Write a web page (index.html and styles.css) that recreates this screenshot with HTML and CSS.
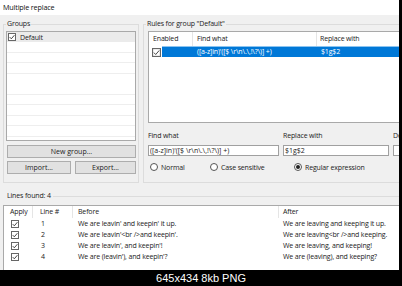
FILE: index.html
```html
<!DOCTYPE html>
<html lang="en">
<head>
  <meta charset="UTF-8">
  <title>Multiple replace</title>
  <link rel="stylesheet" href="styles.css">
</head>
<body>
  <div class="shot">
    <div class="window">
      <div class="titlebar">Multiple replace</div>
      <div class="dialog">
        <div class="top">
          <fieldset class="box groups">
            <legend>Groups</legend>
            <div class="list group-list">
              <div class="group-row">
                <svg class="cb" viewBox="0 0 8 8" width="8" height="8"><rect x="0.5" y="0.5" width="7" height="7" fill="#fff" stroke="#666"/><path d="M1.7 4.1 3.3 5.8 6.4 2.2" fill="none" stroke="#333" stroke-width="0.9"/></svg>
                <span>Default</span>
              </div>
            </div>
            <button class="btn wide">New group...</button>
            <div class="btn-pair">
              <button class="btn">Import...</button>
              <button class="btn">Export...</button>
            </div>
          </fieldset>

          <fieldset class="box rules">
            <legend>Rules for group "Default"</legend>
            <div class="list rules-list">
              <div class="rules-head">
                <span>Enabled</span>
                <span>Find what</span>
                <span>Replace with</span>
              </div>
              <div class="rule-row">
                <svg class="cb big" viewBox="0 0 8 8" width="9" height="9"><rect x="0.5" y="0.5" width="7" height="7" fill="#fff" stroke="#666"/><path d="M1.7 4.1 3.3 5.8 6.4 2.2" fill="none" stroke="#333" stroke-width="0.8"/></svg>
                <div class="sel">
                  <span></span>
                  <span>([a-z]in)'([$ \r\n\.\,!\?\)] +)</span>
                  <span>$1g$2</span>
                </div>
              </div>
            </div>

            <div class="edit">
              <label>Find what</label>
              <label>Replace with</label>
              <label>Description</label>
              <input type="text" value="([a-z]in)'([$ \r\n\.\,!\?\)] +)">
              <input type="text" value="$1g$2">
              <input type="text" value="">
            </div>

            <div class="radios">
              <div class="radio"><span class="dot"></span>Normal</div>
              <div class="radio"><span class="dot"></span>Case sensitive</div>
              <div class="radio"><span class="dot on"></span>Regular expression</div>
            </div>
          </fieldset>
        </div>

        <div class="lines-head"><span>Lines found: 4</span></div>

        <div class="list lines-list">
          <div class="lines-row head">
            <span>Apply</span>
            <span>Line #</span>
            <span>Before</span>
            <span>After</span>
          </div>
          <div class="lines-row">
            <span><svg class="cb" viewBox="0 0 8 8" width="8" height="8"><rect x="0.5" y="0.5" width="7" height="7" fill="#fff" stroke="#666"/><path d="M1.7 4.1 3.3 5.8 6.4 2.2" fill="none" stroke="#333" stroke-width="0.9"/></svg></span>
            <span>1</span>
            <span>We are leavin' and keepin' it up.</span>
            <span>We are leaving and keeping it up.</span>
          </div>
          <div class="lines-row">
            <span><svg class="cb" viewBox="0 0 8 8" width="8" height="8"><rect x="0.5" y="0.5" width="7" height="7" fill="#fff" stroke="#666"/><path d="M1.7 4.1 3.3 5.8 6.4 2.2" fill="none" stroke="#333" stroke-width="0.9"/></svg></span>
            <span>2</span>
            <span>We are leavin'&lt;br /&gt;and keepin'.</span>
            <span>We are leaving&lt;br /&gt;and keeping.</span>
          </div>
          <div class="lines-row">
            <span><svg class="cb" viewBox="0 0 8 8" width="8" height="8"><rect x="0.5" y="0.5" width="7" height="7" fill="#fff" stroke="#666"/><path d="M1.7 4.1 3.3 5.8 6.4 2.2" fill="none" stroke="#333" stroke-width="0.9"/></svg></span>
            <span>3</span>
            <span>We are leavin', and keepin'!</span>
            <span>We are leaving, and keeping!</span>
          </div>
          <div class="lines-row">
            <span><svg class="cb" viewBox="0 0 8 8" width="8" height="8"><rect x="0.5" y="0.5" width="7" height="7" fill="#fff" stroke="#666"/><path d="M1.7 4.1 3.3 5.8 6.4 2.2" fill="none" stroke="#333" stroke-width="0.9"/></svg></span>
            <span>4</span>
            <span>We are (leavin'), and keepin'?</span>
            <span>We are (leaving), and keeping?</span>
          </div>
        </div>
      </div>
    </div>
    <div class="caption">645x434 8kb PNG</div>
  </div>
</body>
</html>
```

FILE: styles.css
```css
* {
  margin: 0;
  padding: 0;
  box-sizing: border-box;
}

body {
  background: #000;
  font-family: "Open Sans", "Noto Sans", sans-serif;
  letter-spacing: -0.15px;
  color: #222;
}

.shot {
  width: 402px;
  height: 286px;
  background: #000;
  display: flex;
  flex-direction: column;
  overflow: hidden;
}

.window {
  width: 399px;
  height: 270px;
  flex-shrink: 0;
  background: #f0f0f0;
  overflow: hidden;
}

.titlebar {
  height: 15px;
  background: #fff;
  padding-left: 3px;
  font-size: 7.2px;
  line-height: 15px;
  color: #111;
}

.dialog {
  padding-left: 3px;
}

.top {
  display: flex;
  gap: 4px;
  margin-top: 4px;
}

.box {
  border: 1px solid #dcdcdc;
  height: 164px;
  flex-shrink: 0;
  min-width: 0;
}

legend {
  font-size: 7px;
  line-height: 10px;
  padding: 0 1px;
  color: #222;
}

.groups {
  width: 136px;
  padding: 2px 2px 0 2px;
}

.rules {
  width: 320px;
  padding: 2px 0 0 4px;
}

.rules legend {
  margin-left: -2px;
}

.list {
  background: #fff;
  border: 1px solid #a9a9a9;
  font-size: 7px;
}

.cb {
  display: block;
  flex-shrink: 0;
}

/* groups */
.group-list {
  height: 110px;
  background: repeating-linear-gradient(#fff 0 9.5px, #eeeeee 9.5px 10.5px);
}

.group-row {
  display: flex;
  align-items: center;
  gap: 4px;
  height: 10px;
  padding-left: 1px;
  background: #ebebeb;
}

.btn {
  display: block;
  width: 129px;
  height: 13px;
  margin-left: 1px;
  background: #e1e1e1;
  border: 1px solid #adadad;
  font: inherit;
  font-size: 7px;
  color: #222;
}

.btn.wide {
  margin-top: 4px;
}

.btn-pair {
  display: grid;
  grid-template-columns: 64px 61px;
  gap: 4px;
  margin: 3px 0 0 1px;
}

.btn-pair .btn {
  width: auto;
  margin: 0;
}

/* rules */
.rules-list {
  height: 92px;
}

.rules-head {
  display: grid;
  grid-template-columns: 44px 124px 1fr;
  height: 14px;
  line-height: 14px;
}

.rules-head span {
  border-right: 1px solid #e5e5e5;
  padding-left: 4px;
}

.rules-head span:last-child {
  padding-left: 3px;
}

.rule-row {
  display: flex;
  height: 11px;
}

.rule-row .cb {
  margin: 2px 0 0 3px;
}

.sel {
  flex: 1;
  margin-left: 1px;
  display: grid;
  grid-template-columns: 31px 124px 1fr;
  background: #0078d7;
  border-top: 1px solid #8cc4f0;
  color: #fff;
  line-height: 10px;
  white-space: nowrap;
}

.sel span + span {
  padding-left: 4px;
}

.edit {
  display: grid;
  grid-template-columns: 131px 106px 100px;
  column-gap: 4px;
  row-gap: 4px;
  margin-top: 8px;
  font-size: 7px;
}

.edit label {
  line-height: 10px;
  white-space: nowrap;
}

.edit input {
  height: 11px;
  border: 1px solid #a0a0a0;
  background: #fff;
  font: inherit;
  font-size: 7px;
  color: #222;
  padding: 0 1px;
  outline: none;
}

.radios {
  display: flex;
  align-items: center;
  height: 10px;
  margin-top: 6px;
  padding-left: 2px;
  font-size: 7px;
}

.radio {
  display: flex;
  align-items: center;
  gap: 3px;
  white-space: nowrap;
}

.radio:nth-child(1) {
  width: 60px;
}

.radio:nth-child(2) {
  width: 84px;
}

.dot {
  width: 8px;
  height: 8px;
  border: 1px solid #555;
  border-radius: 50%;
  background: #fff;
  display: grid;
  place-items: center;
}

.dot.on::after {
  content: "";
  width: 4px;
  height: 4px;
  border-radius: 50%;
  background: #222;
}

/* lines */
.lines-head {
  display: flex;
  align-items: center;
  height: 10px;
  margin-top: 8px;
  padding-left: 4px;
  font-size: 7px;
  line-height: 10px;
  white-space: nowrap;
}

.lines-head::after {
  content: "";
  flex: 1;
  height: 1px;
  margin-left: 2px;
  background: #dcdcdc;
}

.lines-list {
  width: 420px;
  height: 80px;
  margin-top: 4px;
}

.lines-row {
  display: grid;
  grid-template-columns: 29px 40px 206px 1fr;
  height: 11px;
  line-height: 11px;
  white-space: nowrap;
}

.lines-row span {
  display: flex;
  align-items: center;
}

.lines-row span:nth-child(1) { padding-left: 7px; }
.lines-row span:nth-child(2) { padding-left: 8px; }
.lines-row span:nth-child(3) { padding-left: 5px; }
.lines-row span:nth-child(4) { padding-left: 4px; }

.lines-row.head {
  height: 12px;
  line-height: 12px;
}

.lines-row.head span {
  border-right: 1px solid #e5e5e5;
}

.lines-row.head span:nth-child(1) { padding-left: 6px; }
.lines-row.head span:nth-child(2) { padding-left: 7px; }
.lines-row.head span:last-child { border-right: none; }

.caption {
  height: 16px;
  color: #fff;
  font-family: "Liberation Sans", Arial, sans-serif;
  font-size: 11px;
  letter-spacing: 0;
  line-height: 16px;
  text-align: center;
}
```
